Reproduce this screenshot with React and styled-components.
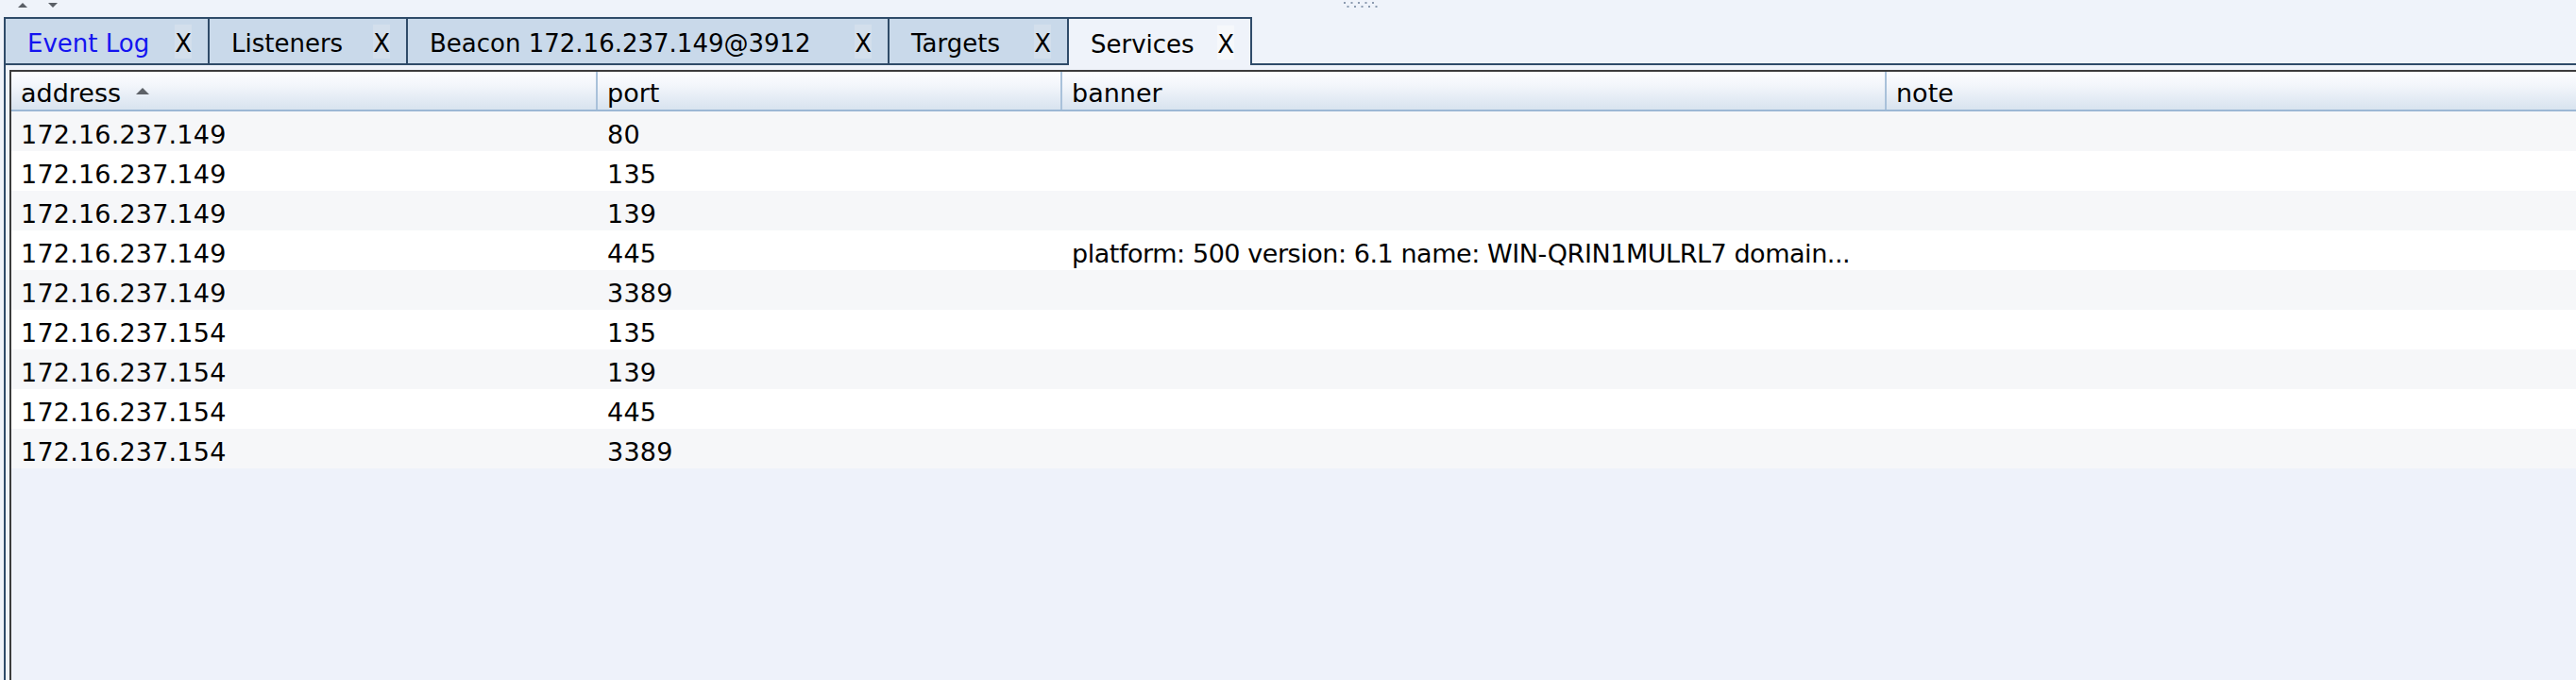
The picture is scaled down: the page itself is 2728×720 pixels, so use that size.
import React from "react";
import styled, { createGlobalStyle } from "styled-components";

const GlobalStyle = createGlobalStyle`
  html, body {
    margin: 0;
    padding: 0;
    background: #eff3fa;
  }
  * {
    box-sizing: border-box;
  }
`;

// widths measured off the tab strip (Lucida metrics differ from DejaVu)
const tabs = [
  { label: "Event Log", width: 218, blue: true },
  { label: "Listeners", width: 212 },
  { label: "Beacon 172.16.237.149@3912", width: 512 },
  { label: "Targets", width: 192 },
  { label: "Services", width: 196, active: true },
];

const columns = ["address", "port", "banner", "note"];

const services = [
  { address: "172.16.237.149", port: "80" },
  { address: "172.16.237.149", port: "135" },
  { address: "172.16.237.149", port: "139" },
  {
    address: "172.16.237.149",
    port: "445",
    banner: "platform: 500 version: 6.1 name: WIN-QRIN1MULRL7 domain...",
  },
  { address: "172.16.237.149", port: "3389" },
  { address: "172.16.237.154", port: "135" },
  { address: "172.16.237.154", port: "139" },
  { address: "172.16.237.154", port: "445" },
  { address: "172.16.237.154", port: "3389" },
];

const App = () => {
  return (
    <Page>
      <GlobalStyle />
      <SplitBar>
        <Arrow viewBox="0 0 10 5">
          <polygon points="5,0 10,5 0,5" />
        </Arrow>
        <Arrow viewBox="0 0 10 5" down>
          <polygon points="0,0 10,0 5,5" />
        </Arrow>
        <Grip viewBox="0 0 36 6">
          {[0, 1, 2, 3, 4].map((i) => (
            <React.Fragment key={i}>
              <rect x={i * 7.5} y="0" width="2" height="2" />
              <rect x={i * 7.5 + 3.5} y="4" width="2" height="2" />
            </React.Fragment>
          ))}
        </Grip>
      </SplitBar>

      <TabStrip>
        {tabs.map((t) => (
          <Tab key={t.label} active={t.active} w={t.width}>
            <TabLabel blue={t.blue}>{t.label}</TabLabel>
            <CloseBtn active={t.active}>X</CloseBtn>
          </Tab>
        ))}
        <TabFiller />
      </TabStrip>

      <Content>
        <Table>
          <HeaderRow>
            {columns.map((c, i) => (
              <HeaderCell key={c} last={i === columns.length - 1}>
                {c}
                {i === 0 && (
                  <SortIcon viewBox="0 0 14 7">
                    <polygon points="7,0 14,7 0,7" />
                  </SortIcon>
                )}
              </HeaderCell>
            ))}
          </HeaderRow>
          {services.map((s, i) => (
            <Row key={i} striped={i % 2 === 0}>
              <Cell>{s.address}</Cell>
              <Cell>{s.port}</Cell>
              <Cell tight>{s.banner || ""}</Cell>
              <Cell>{s.note || ""}</Cell>
            </Row>
          ))}
        </Table>
      </Content>
    </Page>
  );
};

export default App;

const Page = styled.div`
  height: 100vh;
  display: flex;
  flex-direction: column;
  background: #eff3fa;
  font-family: "DejaVu Sans", "Liberation Sans", sans-serif;
  color: #000;
  overflow: hidden;
`;

const SplitBar = styled.div`
  height: 18px;
  display: flex;
  align-items: flex-start;
  padding: 3px 0 0 19px;
`;

const Arrow = styled.svg`
  width: 10px;
  height: 5px;
  margin-left: ${(p) => (p.down ? "22px" : "0")};
  fill: #5a5f66;
`;

const Grip = styled.svg`
  width: 36px;
  height: 6px;
  margin: -1px 0 0 1362px;
  fill: #8c9bb0;
`;

const TabStrip = styled.div`
  height: 51px;
  display: flex;
  padding-left: 4px;
`;

const Tab = styled.div`
  display: flex;
  align-items: center;
  justify-content: space-between;
  width: ${(p) => p.w}px;
  padding: 4px 17px 0 23px;
  margin-right: -2px;
  border: 2px solid #2f4b69;
  border-bottom: ${(p) => (p.active ? "none" : "2px solid #2f4b69")};
  background: ${(p) => (p.active ? "#eff3fa" : "#c9d9ea")};
  font-size: 26px;
  white-space: nowrap;
  position: relative;
  z-index: ${(p) => (p.active ? 1 : 0)};
`;

const TabLabel = styled.span`
  color: ${(p) => (p.blue ? "#1414f0" : "#000")};
`;

const CloseBtn = styled.span`
  display: flex;
  align-items: center;
  height: 36px;
  margin-top: -4px;
  padding-top: 4px;
  background: ${(p) => (p.active ? "#f6f8fb" : "#d3dfec")};
  color: #000;
`;

const TabFiller = styled.div`
  flex: 1;
  border-bottom: 2px solid #2f4b69;
  margin-left: 2px;
`;

const Content = styled.div`
  flex: 1;
  display: flex;
  margin-left: 4px;
  padding: 5px 0 0 4px;
  border-left: 2px solid #2f4b69;
`;

const Table = styled.div`
  flex: 1;
  border-top: 2px solid #3c3c3c;
  border-left: 2px solid #3c3c3c;
  background: #eef2fa;
  font-size: 27px;
`;

const gridCols = "621px 492px 873px 1fr";

const HeaderRow = styled.div`
  display: grid;
  grid-template-columns: ${gridCols};
  height: 42px;
  border-bottom: 2px solid #9cb8d5;
  background: linear-gradient(#fcfdff 0%, #f3f6fb 35%, #d8e3ef 100%);
`;

const HeaderCell = styled.div`
  display: flex;
  align-items: center;
  padding: 5px 0 0 10px;
  border-right: ${(p) => (p.last ? "none" : "2px solid #a9c1da")};
  white-space: nowrap;
`;

const SortIcon = styled.svg`
  width: 14px;
  height: 7px;
  margin: -5px 0 0 16px;
  fill: #5d6167;
`;

const Row = styled.div`
  display: grid;
  grid-template-columns: ${gridCols};
  height: 42px;
  background: ${(p) => (p.striped ? "#f6f7f9" : "#ffffff")};
`;

const Cell = styled.div`
  display: flex;
  align-items: center;
  padding: 6px 12px 0 10px;
  white-space: nowrap;
  overflow: hidden;
  text-overflow: ellipsis;
  letter-spacing: ${(p) => (p.tight ? "-0.45px" : "0.2px")};
  min-width: 0;
`;
